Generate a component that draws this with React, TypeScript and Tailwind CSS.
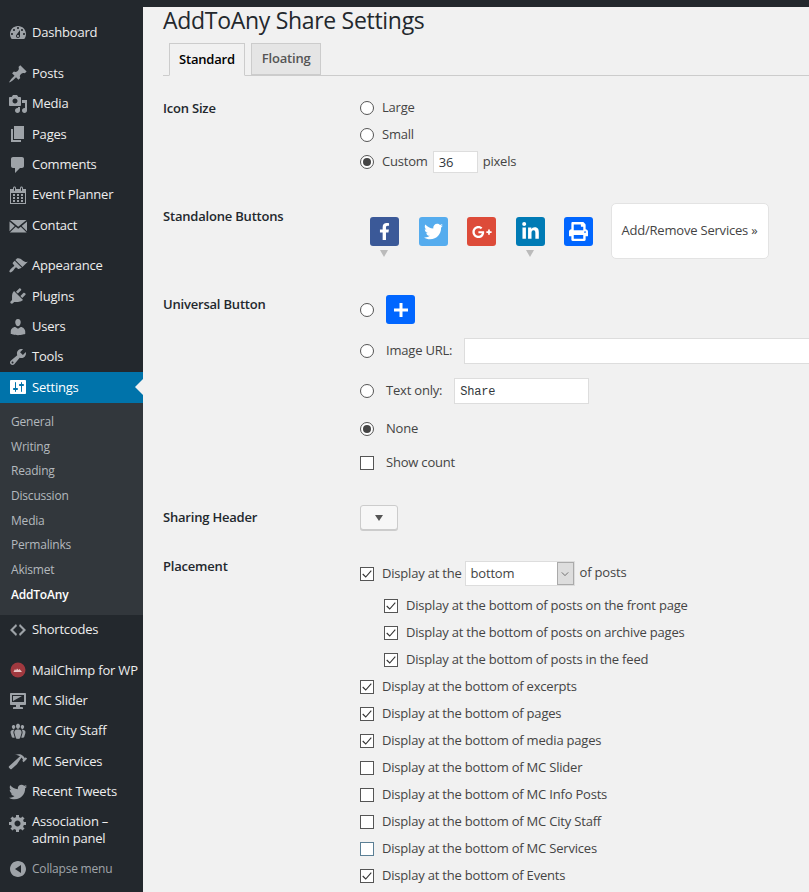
import { FaFacebookF, FaTwitter, FaGooglePlusG, FaLinkedinIn, FaPrint } from 'react-icons/fa';

const d = {
  dashboard: "M3.76 16h12.48c1.1-1.37 1.76-3.11 1.76-5 0-4.42-3.58-8-8-8s-8 3.58-8 8c0 1.89.66 3.63 1.76 5zM10 4c.55 0 1 .45 1 1s-.45 1-1 1-1-.45-1-1 .45-1 1-1zM6 6c.55 0 1 .45 1 1s-.45 1-1 1-1-.45-1-1 .45-1 1-1zm8 0c.55 0 1 .45 1 1s-.45 1-1 1-1-.45-1-1 .45-1 1-1zm-5.37 5.55L12 7v6c0 1.1-.9 2-2 2s-2-.9-2-2c0-.57.24-1.08.63-1.45zM4 10c.55 0 1 .45 1 1s-.45 1-1 1-1-.45-1-1 .45-1 1-1zm12 0c.55 0 1 .45 1 1s-.45 1-1 1-1-.45-1-1 .45-1 1-1zm-5 3c0-.55-.45-1-1-1s-1 .45-1 1 .45 1 1 1 1-.45 1-1z",
  post: "M10.44 3.02l1.82-1.82 6.36 6.35-1.83 1.82c-1.05-.68-2.48-.57-3.41.36l-.75.75c-.92.93-1.04 2.35-.35 3.41l-1.83 1.82-2.41-2.41-2.8 2.79c-.42.42-3.38 2.71-3.8 2.29s1.86-3.39 2.28-3.81l2.79-2.79L4.1 9.36l1.83-1.82c1.05.69 2.48.57 3.4-.36l.75-.75c.93-.92 1.05-2.35.36-3.41z",
  media: "M13 11V4c0-.55-.45-1-1-1h-1.67L9 1H5L3.67 3H2c-.55 0-1 .45-1 1v7c0 .55.45 1 1 1h10c.55 0 1-.45 1-1zM7 4.5c1.38 0 2.5 1.12 2.5 2.5S8.38 9.5 7 9.5 4.5 8.38 4.5 7 5.62 4.5 7 4.5zM14 6h5v10.5c0 1.38-1.12 2.5-2.5 2.5S14 17.88 14 16.5s1.12-2.5 2.5-2.5c.17 0 .34.02.5.05V9h-3V6zm-4 8.05V13h2v3.5c0 1.38-1.12 2.5-2.5 2.5S7 17.88 7 16.5 8.12 14 9.5 14c.17 0 .34.02.5.05z",
  page: "M6 15V2h10v13H6zm-1 1h8v2H3V5h2v11z",
  comment: "M5 2h9c1.1 0 2 .9 2 2v7c0 1.1-.9 2-2 2h-2l-5 5v-5H5c-1.1 0-2-.9-2-2V4c0-1.1.9-2 2-2z",
  calendar: "M15 4h3v15H2V4h3V3c0-.8.7-1.5 1.5-1.5S8 2.200 8 3v1h4V3c0-.8.7-1.5 1.5-1.5S15 2.200 15 3v1zM6 3v2.500c0 .3.2.5.5.5s.5-.2.5-.5V3c0-.3-.2-.5-.5-.5S6 2.700 6 3zm7 0v2.500c0 .3.2.5.5.5s.5-.2.5-.5V3c0-.3-.2-.5-.5-.5S13 2.700 13 3zM17 8H3v10h14V8zM5 9h2v2H5V9zm4 0h2v2H9V9zm4 0h2v2h-2V9zm-8 3h2v2H5v-2zm4 0h2v2H9v-2zm4 0h2v2h-2v-2zm-8 3h2v2H5v-2zm4 0h2v2H9v-2zm4 0h2v2h-2v-2z",
  email: "M2 4h16.500L10.200 10.800 2 4zm-.5 1.500v9.700l5.300-5.300L1.500 5.500zM19 5.500l-5.300 4.400 5.300 5.300V5.500zM7.700 10.700L1.800 16.500h16.900l-5.900-5.800-2.600 2.100-2.500-2.100z",
  appearance: "M14.48 11.06L7.41 3.99l1.5-1.5c.5-.56 2.3-.47 3.51.32 1.21.8 1.43 1.28 2.91 2.1 1.18.64 2.45 1.26 4.45.85zm-.71.71L6.7 4.7 4.93 6.47c-.39.39-.39 1.02 0 1.41l1.06 1.06c.39.39.39 1.03 0 1.42-.6.6-1.43 1.11-2.21 1.69-.35.26-.7.53-1.01.84-1.32 1.32-1.79 2.73-1.1 3.17.44.69 1.85.22 3.17-1.1.31-.31.58-.66.84-1.01.58-.78 1.09-1.61 1.69-2.21.39-.39 1.03-.39 1.42 0l1.06 1.06c.39.39 1.02.39 1.41 0z",
  plugins: "M13.11 4.36L9.87 7.6 8 5.73l3.24-3.24c.35-.34 1.05-.2 1.56.32.52.51.66 1.21.31 1.55zm-8 1.77l.91-1.12 9.01 9.01-1.19.84c-.71.71-2.63 1.16-3.82 1.16H6.14L4.9 17.26c-.59.59-1.54.59-2.12 0-.59-.58-.59-1.53 0-2.12l1.24-1.24v-3.88c0-1.13.4-3.19 1.09-3.89zm7.26 3.97l3.24-3.24c.34-.35 1.04-.21 1.55.31.52.51.66 1.21.31 1.55l-3.24 3.25z",
  users: "M10 9.25c-2.27 0-2.73-3.44-2.73-3.44C7 4.02 7.82 2 9.97 2c2.16 0 2.98 2.02 2.71 3.81 0 0-.41 3.44-2.68 3.44zm0 2.57L12.72 10c2.39 0 4.52 2.33 4.52 4.53v2.49s-3.65 1.13-7.24 1.13c-3.65 0-7.24-1.13-7.24-1.13v-2.49c0-2.25 1.94-4.48 4.47-4.48z",
  tools: "M16.68 9.77c-1.34 1.34-3.3 1.67-4.95.99l-5.41 6.52c-.99.99-2.59.99-3.58 0s-.99-2.59 0-3.57l6.52-5.42c-.68-1.65-.35-3.61.99-4.95 1.28-1.28 3.12-1.62 4.72-1.06l-2.89 2.89 2.82 2.82 2.86-2.87c.53 1.58.18 3.39-1.08 4.65zM3.81 16.21c.4.39 1.04.39 1.43 0 .4-.4.4-1.04 0-1.43-.39-.4-1.03-.4-1.43 0-.39.39-.39 1.03 0 1.43z",
  settings: "M18 16V4c0-.55-.45-1-1-1H3c-.55 0-1 .45-1 1v12c0 .55.45 1 1 1h14c.55 0 1-.45 1-1zM8 11h1c.55 0 1 .45 1 1s-.45 1-1 1H8v1.500c0 .28-.22.5-.5.5s-.5-.22-.5-.5V13H6c-.55 0-1-.45-1-1s.45-1 1-1h1V5.500c0-.28.22-.5.5-.5s.5.22.5.5V11zm5-2h-1c-.55 0-1-.45-1-1s.45-1 1-1h1V5.500c0-.28.22-.5.5-.5s.5.22.5.5V7h1c.55 0 1 .45 1 1s-.45 1-1 1h-1v5.500c0 .28-.22.5-.5.5s-.5-.22-.5-.5V9z",
  code: "M9 6l-4 4 4 4-1 2-6-6 6-6zm2 8l4-4-4-4 1-2 6 6-6 6z",
  desktop: "M3 2h14c.55 0 1 .45 1 1v10c0 .55-.45 1-1 1h-5v2h2c.55 0 1 .45 1 1v1H5v-1c0-.55.45-1 1-1h2v-2H3c-.55 0-1-.45-1-1V3c0-.55.45-1 1-1zm13 9V4H4v7h12zM5 5h9L5 10V5z",
  groups: "M8.03 4.46c-.29 1.28.55 3.46 1.97 3.46 1.41 0 2.25-2.18 1.96-3.46-.22-.98-1.08-1.63-1.96-1.63-.89 0-1.74.65-1.97 1.63zm-4.13.9c-.25 1.08.47 2.93 1.67 2.93s1.92-1.85 1.67-2.93c-.19-.83-.92-1.39-1.67-1.39s-1.48.56-1.67 1.39zm8.86 0c-.25 1.08.47 2.93 1.66 2.93 1.2 0 1.92-1.85 1.67-2.93-.19-.83-.92-1.39-1.67-1.39-.74 0-1.47.56-1.66 1.39zm-.59 11.43l1.25-4.3C14.2 10 12.71 8.47 10 8.47c-2.72 0-4.21 1.53-3.44 4.02l1.26 4.3C8.05 17.51 9 18 10 18c.98 0 1.94-.49 2.17-1.21zm-6.1-7.63c-.49.67-.96 1.83-.42 3.59l1.12 3.79c-.34.2-.77.31-1.2.31-.85 0-1.65-.41-1.85-1.03l-1.07-3.65c-.65-2.11.61-3.4 2.92-3.4.27 0 .54.02.79.06-.1.1-.2.22-.29.33zm8.35-.39c2.31 0 3.58 1.29 2.92 3.4l-1.07 3.65c-.2.62-1 1.03-1.85 1.03-.43 0-.86-.11-1.2-.31l1.11-3.77c.55-1.78.08-2.94-.42-3.61-.08-.11-.18-.23-.28-.33.25-.04.51-.06.79-.06z",
  hammer: "M17.7 6.32l1.41 1.42-3.47 3.41-1.42-1.42.84-.82c-.32-.76-.81-1.57-1.51-2.31l-4.61 6.59-5.26 4.7c-.39.39-1.02.39-1.42 0l-1.2-1.21c-.39-.39-.39-1.02 0-1.41l10.97-9.92c-1.37-.86-3.21-1.46-5.67-1.48 2.7-.82 4.95-.93 6.58-.3 1.7.66 2.82 2.2 3.91 3.58z",
  gear: "M18 12h-2.180c-.17.7-.44 1.350-.81 1.930l1.540 1.540-2.100 2.100-1.540-1.540c-.58.36-1.230.63-1.910.79V19H8v-2.180c-.68-.16-1.330-.43-1.910-.79l-1.540 1.540-2.120-2.120 1.540-1.540c-.36-.58-.63-1.230-.79-1.910H1V9.030h2.170c.16-.7.44-1.350.8-1.940L2.430 5.550l2.100-2.100 1.540 1.540c.58-.37 1.240-.64 1.930-.81V2h3v2.180c.68.16 1.330.43 1.910.79l1.540-1.540 2.120 2.120-1.540 1.540c.36.59.64 1.240.8 1.940H18V12zm-8.500 1.500c1.660 0 3-1.340 3-3s-1.340-3-3-3-3 1.340-3 3 1.340 3 3 3z",
  collapse: "M18 10c0-4.420-3.580-8-8-8s-8 3.580-8 8 3.580 8 8 8 8-3.580 8-8zm-5-4v8l-6-4z",
};

function Dash({ path, className = "text-[#9ea3a8]" }: { path: string; className?: string }) {
  return (
    <svg viewBox="0 0 20 20" className={`w-5 h-5 fill-current ${className}`}>
      <path d={path} fillRule="evenodd" />
    </svg>
  );
}

function MenuItem({ label, icon, gap }: { label: string; icon: React.ReactNode; gap?: boolean }) {
  return (
    <div className={`flex items-center h-[30.4px] text-[#eee] ${gap ? 'mt-[10px]' : ''}`}>
      <span className="w-8 flex justify-center pl-[3px]">{icon}</span>
      <span>{label}</span>
    </div>
  );
}

function Radio({ checked }: { checked?: boolean }) {
  return (
    <span className="w-[14px] h-[14px] rounded-full border border-[#555] bg-white flex items-center justify-center shrink-0">
      {checked && <span className="w-2 h-2 rounded-full bg-[#444]" />}
    </span>
  );
}

function Check({ checked, focus }: { checked?: boolean; focus?: boolean }) {
  return (
    <span className={`w-[14px] h-[14px] border bg-white flex items-center justify-center shrink-0 ${focus ? 'border-[#5b7f95]' : 'border-[#555]'}`}>
      {checked && (
        <svg viewBox="0 0 14 14" className="w-3 h-3">
          <path d="M2 7l3.500 3.500L12 3" fill="none" stroke="#333" strokeWidth="1.300" />
        </svg>
      )}
    </span>
  );
}

function CheckRow({ label, checked, focus, sub }: { label: string; checked?: boolean; focus?: boolean; sub?: boolean }) {
  return (
    <div className={`flex items-center gap-[8px] h-[27px] ${sub ? 'pl-6' : ''}`}>
      <Check checked={checked} focus={focus} />
      <span>{label}</span>
    </div>
  );
}

function Share({ bg, children, caret }: { bg: string; children: React.ReactNode; caret?: boolean }) {
  return (
    <div className="relative">
      <div className={`w-[29px] h-[29px] rounded-[3px] flex items-center justify-center text-white ${bg}`}>{children}</div>
      {caret && <span className="absolute left-[10px] top-[33px] w-0 h-0 border-x-[4px] border-x-transparent border-t-[7px] border-t-[#bbb]" />}
    </div>
  );
}

export default function App() {
  return (
    <div className="flex w-[809px] h-[892px] overflow-hidden bg-[#f1f1f1] text-[13px] text-[#444] font-['Open_Sans',sans-serif] tracking-[-0.2px]">
      {/* Sidebar */}
      <aside className="w-[143px] shrink-0 bg-[#23282d] pt-[18px]">
        <MenuItem label="Dashboard" icon={<Dash path={d.dashboard} />} />
        <MenuItem gap label="Posts" icon={<Dash path={d.post} />} />
        <MenuItem label="Media" icon={<Dash path={d.media} />} />
        <MenuItem label="Pages" icon={<Dash path={d.page} />} />
        <MenuItem label="Comments" icon={<Dash path={d.comment} />} />
        <MenuItem label="Event Planner" icon={<Dash path={d.calendar} />} />
        <MenuItem label="Contact" icon={<Dash path={d.email} />} />
        <MenuItem gap label="Appearance" icon={<Dash path={d.appearance} />} />
        <MenuItem label="Plugins" icon={<Dash path={d.plugins} />} />
        <MenuItem label="Users" icon={<Dash path={d.users} />} />
        <MenuItem label="Tools" icon={<Dash path={d.tools} />} />
        <div className="relative flex items-center h-[30.4px] bg-[#0073aa] text-white">
          <span className="w-8 flex justify-center pl-[3px]"><Dash path={d.settings} className="text-white" /></span>
          <span>Settings</span>
          <span className="absolute right-0 top-[7px] w-0 h-0 border-y-[8px] border-y-transparent border-r-[8px] border-r-[#f1f1f1]" />
        </div>
        <div className="bg-[#32373c] text-[#b4b9be] text-[12px] pt-[7px] pb-[7px] h-[212px] pl-[11px]">
          {['General', 'Writing', 'Reading', 'Discussion', 'Media', 'Permalinks', 'Akismet'].map((s) => (
            <div key={s} className="h-[24.7px] flex items-center">{s}</div>
          ))}
          <div className="h-[24.7px] flex items-center text-white font-semibold">AddToAny</div>
        </div>
        <MenuItem label="Shortcodes" icon={<Dash path={d.code} />} />
        <MenuItem gap label="MailChimp for WP" icon={
          <svg viewBox="0 0 20 20" className="w-5 h-5">
            <circle cx="10" cy="10" r="7.500" fill="#a0393f" />
            <path d="M5.500 12l1.500-3 1 1.500 1-2 1.500 1.500 1-1 2.500 3z" fill="#eac8c8" />
          </svg>
        } />
        <MenuItem label="MC Slider" icon={<Dash path={d.desktop} />} />
        <MenuItem label="MC City Staff" icon={<Dash path={d.groups} />} />
        <MenuItem label="MC Services" icon={<Dash path={d.hammer} />} />
        <MenuItem label="Recent Tweets" icon={<FaTwitter className="w-[18px] h-[18px] text-[#9ea3a8]" />} />
        <div className="flex text-[#eee] pt-[6px] leading-[17px]">
          <span className="w-8 flex justify-center pl-[3px]"><Dash path={d.gear} /></span>
          <span>Association –<br />admin panel</span>
        </div>
        <div className="flex items-center text-[#a0a5aa] text-[12px] mt-[12px]">
          <span className="w-8 flex justify-center pl-[3px]"><Dash path={d.collapse} /></span>
          <span>Collapse menu</span>
        </div>
      </aside>

      {/* Main */}
      <main className="flex-1 min-w-0 flex flex-col">
        <div className="h-[7px] bg-[#23282d] shrink-0 -ml-px" />
        <div className="pl-5">
          <h1 className="text-[23px] leading-[26px] text-[#23282d] mt-[0px] tracking-[-0.3px]">AddToAny Share Settings</h1>
          <div className="flex gap-[6px] mt-[10px] pl-[6px] border-b border-[#ccc] h-[33px]">
            <div className="h-[33px] px-[9px] border border-[#ccc] border-b-[#f1f1f1] bg-[#f1f1f1] font-semibold text-[#000] flex items-center">Standard</div>
            <div className="h-[32px] px-[10px] border border-[#ccc] bg-[#e5e5e5] font-semibold text-[#555] flex items-center">Floating</div>
          </div>

          <div className="flex mt-[18px]">
            <div className="w-[197px] shrink-0 font-semibold text-[#23282d] pt-[5px] leading-[18px]">Icon Size</div>
            <div>
              <div className="flex items-center gap-[8px] h-[27px]"><Radio /><span>Large</span></div>
              <div className="flex items-center gap-[8px] h-[27px]"><Radio /><span>Small</span></div>
              <div className="flex items-center gap-[8px] h-[27px]">
                <Radio checked /><span>Custom</span>
                <span className="w-[45px] h-[22px] -ml-[3px] border border-[#ddd] bg-white pl-[5px] leading-[20px] text-[#32373c]">36</span>
                <span className="-ml-[3px]">pixels</span>
              </div>
            </div>
          </div>

          <div className="flex mt-[28px]">
            <div className="w-[197px] shrink-0 font-semibold text-[#23282d] pt-[4px] leading-[18px]">Standalone Buttons</div>
            <div className="flex items-start gap-[19.500px] pl-[10px]">
              <div className="flex gap-[19.500px] pt-[14px]">
                <Share bg="bg-[#3b5998]" caret><FaFacebookF className="w-[17px] h-[17px]" /></Share>
                <Share bg="bg-[#55acee]"><FaTwitter className="w-[19px] h-[19px]" /></Share>
                <Share bg="bg-[#dd4b39]"><FaGooglePlusG className="w-[20px] h-[20px]" /></Share>
                <Share bg="bg-[#007bb5]" caret><FaLinkedinIn className="w-[19px] h-[19px]" /></Share>
                <Share bg="bg-[#0166ff]"><FaPrint className="w-[19px] h-[19px]" /></Share>
              </div>
              <div className="w-[158px] h-[56px] -ml-[2px] bg-white border border-[#e3e3e3] rounded-[5px] flex items-center justify-center">Add/Remove Services »</div>
            </div>
          </div>

          <div className="flex mt-[36px]">
            <div className="w-[197px] shrink-0 font-semibold text-[#23282d] pt-[0px] leading-[18px]">Universal Button</div>
            <div className="-mt-[0px]">
              <div className="flex items-center gap-[12px] h-[29px]">
                <Radio />
                <div className="w-[29px] h-[29px] rounded-[3px] bg-[#0166ff] flex items-center justify-center">
                  <svg viewBox="0 0 20 20" className="w-5 h-5"><path d="M8.500 3h3v5.500H17v3h-5.500V17h-3v-5.500H3v-3h5.500z" fill="#fff" /></svg>
                </div>
              </div>
              <div className="flex items-center gap-[12px] h-[26px] mt-[14px] whitespace-nowrap">
                <Radio /><span>Image URL:</span>
                <span className="w-[400px] h-[26px] border border-[#ddd] bg-white ml-[0px] shrink-0" />
              </div>
              <div className="flex items-center gap-[12px] h-[26px] mt-[14px]">
                <Radio /><span>Text only:</span>
                <span className="w-[135px] h-[26px] border border-[#ddd] bg-white pl-[5px] font-['Liberation_Mono',monospace] text-[12px] leading-[26px] text-[#32373c]">Share</span>
              </div>
              <div className="flex items-center gap-[12px] h-[18px] mt-[16px]"><Radio checked /><span>None</span></div>
              <div className="flex items-center gap-[12px] h-[18px] mt-[16px]"><Check /><span>Show count</span></div>
            </div>
          </div>

          <div className="flex mt-[33px]">
            <div className="w-[197px] shrink-0 font-semibold text-[#23282d] pt-[3px] leading-[18px]">Sharing Header</div>
            <div className="w-[38px] h-[25px] border border-[#ccc] rounded-[3px] bg-[#f7f7f7] shadow-[0_1px_0_#ccc] flex items-center justify-center">
              <span className="w-0 h-0 border-x-[4px] border-x-transparent border-t-[6px] border-t-[#555]" />
            </div>
          </div>

          <div className="flex mt-[31px]">
            <div className="w-[197px] shrink-0 font-semibold text-[#23282d] leading-[18px] -mt-[4px]">Placement</div>
            <div className="whitespace-nowrap">
              <div className="flex items-center h-[25px]">
                <Check checked />
                <span className="ml-[8px]">Display at the</span>
                <span className="ml-[3px] w-[110px] h-[25px] border border-[#ddd] bg-white pl-[5px] flex items-center justify-between">
                  bottom
                  <span className="w-[17px] h-[23px] border border-[#aaa] bg-[#ddd] flex items-center justify-center">
                    <svg viewBox="0 0 10 10" className="w-2 h-2"><path d="M1 3l4 4 4-4" fill="none" stroke="#555" strokeWidth="1" /></svg>
                  </span>
                </span>
                <span className="ml-[5px] -mt-[2px]">of posts</span>
              </div>
              <div className="mt-[6px]">
                <CheckRow sub checked label="Display at the bottom of posts on the front page" />
                <CheckRow sub checked label="Display at the bottom of posts on archive pages" />
                <CheckRow sub checked label="Display at the bottom of posts in the feed" />
                <CheckRow checked label="Display at the bottom of excerpts" />
                <CheckRow checked label="Display at the bottom of pages" />
                <CheckRow checked label="Display at the bottom of media pages" />
                <CheckRow label="Display at the bottom of MC Slider" />
                <CheckRow label="Display at the bottom of MC Info Posts" />
                <CheckRow label="Display at the bottom of MC City Staff" />
                <CheckRow focus label="Display at the bottom of MC Services" />
                <CheckRow checked label="Display at the bottom of Events" />
              </div>
            </div>
          </div>
        </div>
      </main>
    </div>
  );
}
